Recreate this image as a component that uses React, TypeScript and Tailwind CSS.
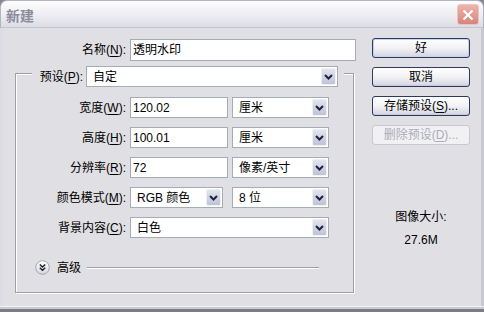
import React from "react";

const U = ({ c }: { c: string }) => (
  <span className="underline underline-offset-[2px] decoration-[1px]">{c}</span>
);

function Chevron() {
  return (
    <svg width="9" height="6" viewBox="0 0 9 6">
      <path d="M1 1 L4.5 4.5 L8 1" stroke="#1c2340" strokeWidth="2" fill="none" />
    </svg>
  );
}

function ArrowBtn() {
  return (
    <div className="h-full w-[15px] flex-none flex items-center justify-center rounded-[2px] border border-[#eef0f6] bg-gradient-to-b from-[#e2e4ee] to-[#bfc3d4]">
      <Chevron />
    </div>
  );
}

function Select({ w, value }: { w: string; value: string }) {
  return (
    <div className={`flex items-center h-[21px] border border-[#a5acb5] bg-white p-[1px] ${w}`}>
      <span className="flex-1 pl-[5px] whitespace-nowrap overflow-hidden leading-[14px]">{value}</span>
      <ArrowBtn />
    </div>
  );
}

function Input({ w, h, value }: { w: string; h: string; value: string }) {
  return (
    <div className={`flex items-center border border-[#a5acb5] bg-white pl-[2px] ${w} ${h}`}>
      <span className="whitespace-nowrap leading-[14px]">{value}</span>
    </div>
  );
}

function Row({ label, children }: { label: React.ReactNode; children: React.ReactNode }) {
  return (
    <div className="flex items-center h-[21px]">
      <div className="w-[110px] text-right whitespace-nowrap leading-[14px]">{label}</div>
      <div className="ml-[4px] flex items-center gap-[4px]">{children}</div>
    </div>
  );
}

function Btn({ children, def, disabled }: { children: React.ReactNode; def?: boolean; disabled?: boolean }) {
  if (disabled) {
    return (
      <div className="h-[20px] w-[98px] flex items-center justify-center rounded-[3px] border border-[#c9c9d2] bg-[#f1f1f4] text-[#acacb8] leading-[14px] whitespace-nowrap">
        {children}
      </div>
    );
  }
  return (
    <div
      className={`h-[20px] w-[98px] flex items-center justify-center rounded-[3px] border border-[#2b3a5e] bg-gradient-to-b from-[#ffffff] via-[#f2f2f6] to-[#d4d4e0] leading-[14px] whitespace-nowrap ${
        def ? "shadow-[inset_0_0_0_1px_#c4d0ee]" : "shadow-[inset_0_-1px_0_#c8c8d6]"
      }`}
    >
      {children}
    </div>
  );
}

export default function App() {
  return (
    <div className="w-[484px] h-[312px] flex flex-col overflow-hidden bg-[#85858d] font-['Liberation_Sans','Noto_Sans_CJK_SC',sans-serif] text-[12px] text-black">
      {/* Title bar */}
      <div className="h-[28px] flex-none flex items-center justify-between pl-[5px] pr-[4px] rounded-t-[7px] border-x border-t border-[#b4b4c0] bg-gradient-to-b from-[#fdfdfe] via-[#eeeef3] to-[#dadae3] shadow-[inset_0_-1px_0_#c6c6d0]">
        <span className="font-bold text-[14px] text-[#8c8c9a] leading-[16px] font-['Noto_Sans_CJK_SC',sans-serif]">新建</span>
        <div className="w-[22px] h-[21px] flex items-center justify-center rounded-[3px] border border-[#eec4c0] bg-gradient-to-b from-[#eeb4ac] to-[#d4857c]">
          <svg width="12" height="12" viewBox="0 0 12 12">
            <path d="M1.5 1.5 L10.5 10.5 M10.5 1.5 L1.5 10.5" stroke="#ffffff" strokeWidth="2" fill="none" />
          </svg>
        </div>
      </div>

      {/* Body */}
      <div className="flex-1 flex bg-[#e0dfe3] border-l-[3px] border-r-[3px] border-l-[#dcdce4] border-r-[#c8c8d2]">
        {/* Left column */}
        <div className="flex-none w-[353px] flex flex-col">
          <div className="mt-[11px] flex items-center">
            <div className="w-[123px] text-right whitespace-nowrap leading-[14px]">
              名称(<U c="N" />):
            </div>
            <div className="ml-[4px]">
              <Input w="w-[226px]" h="h-[22px]" value="透明水印" />
            </div>
          </div>

          {/* Group box */}
          <div className="mt-[12px] ml-[12px] w-[339px] h-[220px] flex flex-col border border-[#a0a0a8] shadow-[inset_1px_1px_0_#ffffff,1px_1px_0_#ffffff]">
            <div className="-mt-[8px] ml-[16px] w-[312px] h-[21px] flex-none flex items-center bg-[#e0dfe3] pl-[3px]">
              <div className="w-[48px] text-right whitespace-nowrap leading-[14px]">
                预设(<U c="P" />):
              </div>
              <div className="ml-[3px]">
                <Select w="w-[252px]" value="自定" />
              </div>
            </div>

            <div className="mt-[10px] flex flex-col gap-[9px]">
              <Row label={<>宽度(<U c="W" />):</>}>
                <Input w="w-[98px]" h="h-[21px]" value="120.02" />
                <Select w="w-[97px]" value="厘米" />
              </Row>
              <Row label={<>高度(<U c="H" />):</>}>
                <Input w="w-[98px]" h="h-[21px]" value="100.01" />
                <Select w="w-[97px]" value="厘米" />
              </Row>
              <Row label={<>分辨率(<U c="R" />):</>}>
                <Input w="w-[98px]" h="h-[21px]" value="72" />
                <Select w="w-[97px]" value="像素/英寸" />
              </Row>
              <Row label={<>颜色模式(<U c="M" />):</>}>
                <Select w="w-[93px]" value="RGB 颜色" />
                <div className="ml-[5px]">
                  <Select w="w-[97px]" value="8 位" />
                </div>
              </Row>
              <Row label={<>背景内容(<U c="C" />):</>}>
                <Select w="w-[199px]" value="白色" />
              </Row>
            </div>

            <div className="mt-[22px] flex items-center h-[15px] pl-[19px]">
              <svg width="15" height="15" viewBox="0 0 15 15" className="flex-none">
                <defs>
                  <linearGradient id="cg" x1="0" y1="0" x2="0" y2="1">
                    <stop offset="0" stopColor="#ffffff" />
                    <stop offset="1" stopColor="#d6d6e0" />
                  </linearGradient>
                </defs>
                <circle cx="7.5" cy="7.5" r="6.8" fill="url(#cg)" stroke="#a4a4b0" strokeWidth="1" />
                <path d="M4.8 4.6 L7.5 7 L10.2 4.6 M4.8 7.8 L7.5 10.2 L10.2 7.8" stroke="#1c1c2c" strokeWidth="1.4" fill="none" />
              </svg>
              <span className="ml-[7px] whitespace-nowrap leading-[14px]">高级</span>
              <div className="flex-1 ml-[6px] mr-[34px] h-[2px] border-t border-b border-t-[#a0a0a8] border-b-[#ffffff]" />
            </div>
          </div>
        </div>

        {/* Right column */}
        <div className="ml-[16px] w-[98px] flex-none flex flex-col pt-[10px]">
          <div className="flex flex-col gap-[9px]">
            <Btn def>好</Btn>
            <Btn>取消</Btn>
            <Btn>
              存储预设(<U c="S" />)...
            </Btn>
            <Btn disabled>
              删除预设(<U c="D" />)...
            </Btn>
          </div>
          <div className="mt-[65px] text-center leading-[14px] whitespace-nowrap">图像大小:</div>
          <div className="mt-[9px] text-center leading-[14px]">27.6M</div>
        </div>
      </div>

      {/* Bottom frame */}
      <div className="h-[6px] flex-none flex flex-col">
        <div className="h-[1px] bg-[#f2f2f6]" />
        <div className="h-[2px] bg-[#cacad2]" />
        <div className="flex-1 bg-[#7c7c84]" />
      </div>
    </div>
  );
}
